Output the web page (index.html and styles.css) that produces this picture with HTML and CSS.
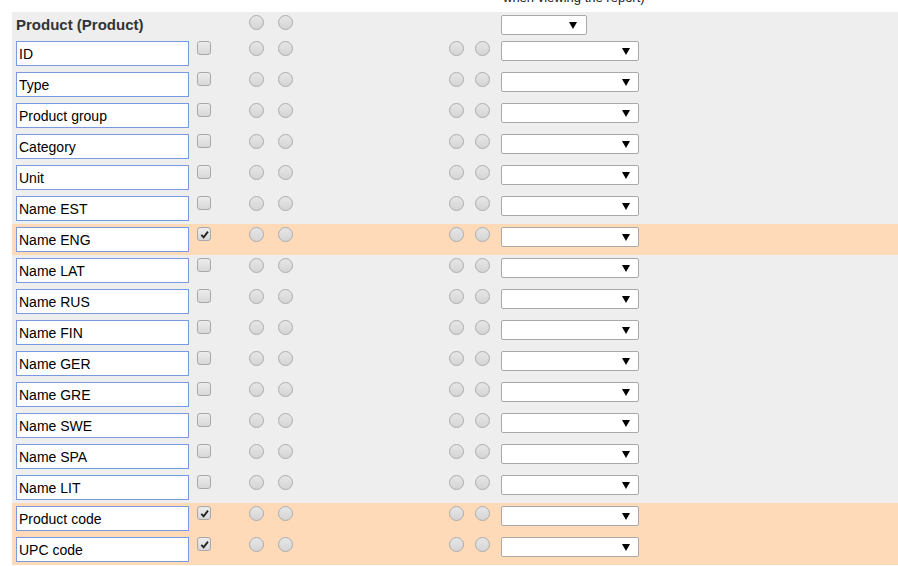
FILE: index.html
```html
<!DOCTYPE html>
<html lang="en">
<head>
    <meta charset="UTF-8">
    <meta name="viewport" content="width=device-width, initial-scale=1.0">
    <title>Report fields</title>
    <link rel="stylesheet" href="styles.css">
</head>
<body>
    <div class="caption"><p>when viewing the report)</p></div>

    <div class="panel">
        <div class="row head">
            <div class="title">Product (Product)</div>
            <span class="radio"></span>
            <span class="radio r2"></span>
            <div class="pick small"></div>
        </div>

        <div class="row"><input class="name" value="ID"><span class="check"></span><span class="radio r1"></span><span class="radio r2"></span><span class="radio r3"></span><span class="radio r4"></span><div class="pick"></div></div>
        <div class="row"><input class="name" value="Type"><span class="check"></span><span class="radio r1"></span><span class="radio r2"></span><span class="radio r3"></span><span class="radio r4"></span><div class="pick"></div></div>
        <div class="row"><input class="name" value="Product group"><span class="check"></span><span class="radio r1"></span><span class="radio r2"></span><span class="radio r3"></span><span class="radio r4"></span><div class="pick"></div></div>
        <div class="row"><input class="name" value="Category"><span class="check"></span><span class="radio r1"></span><span class="radio r2"></span><span class="radio r3"></span><span class="radio r4"></span><div class="pick"></div></div>
        <div class="row"><input class="name" value="Unit"><span class="check"></span><span class="radio r1"></span><span class="radio r2"></span><span class="radio r3"></span><span class="radio r4"></span><div class="pick"></div></div>
        <div class="row"><input class="name" value="Name EST"><span class="check"></span><span class="radio r1"></span><span class="radio r2"></span><span class="radio r3"></span><span class="radio r4"></span><div class="pick"></div></div>
        <div class="row picked"><input class="name" value="Name ENG"><span class="check on"><svg viewBox="0 0 12 12"><path d="M2.5 6.5 L5 9 L9.8 2.8" fill="none" stroke="#222" stroke-width="2"/></svg></span><span class="radio r1"></span><span class="radio r2"></span><span class="radio r3"></span><span class="radio r4"></span><div class="pick"></div></div>
        <div class="row"><input class="name" value="Name LAT"><span class="check"></span><span class="radio r1"></span><span class="radio r2"></span><span class="radio r3"></span><span class="radio r4"></span><div class="pick"></div></div>
        <div class="row"><input class="name" value="Name RUS"><span class="check"></span><span class="radio r1"></span><span class="radio r2"></span><span class="radio r3"></span><span class="radio r4"></span><div class="pick"></div></div>
        <div class="row"><input class="name" value="Name FIN"><span class="check"></span><span class="radio r1"></span><span class="radio r2"></span><span class="radio r3"></span><span class="radio r4"></span><div class="pick"></div></div>
        <div class="row"><input class="name" value="Name GER"><span class="check"></span><span class="radio r1"></span><span class="radio r2"></span><span class="radio r3"></span><span class="radio r4"></span><div class="pick"></div></div>
        <div class="row"><input class="name" value="Name GRE"><span class="check"></span><span class="radio r1"></span><span class="radio r2"></span><span class="radio r3"></span><span class="radio r4"></span><div class="pick"></div></div>
        <div class="row"><input class="name" value="Name SWE"><span class="check"></span><span class="radio r1"></span><span class="radio r2"></span><span class="radio r3"></span><span class="radio r4"></span><div class="pick"></div></div>
        <div class="row"><input class="name" value="Name SPA"><span class="check"></span><span class="radio r1"></span><span class="radio r2"></span><span class="radio r3"></span><span class="radio r4"></span><div class="pick"></div></div>
        <div class="row"><input class="name" value="Name LIT"><span class="check"></span><span class="radio r1"></span><span class="radio r2"></span><span class="radio r3"></span><span class="radio r4"></span><div class="pick"></div></div>
        <div class="row picked"><input class="name" value="Product code"><span class="check on"><svg viewBox="0 0 12 12"><path d="M2.5 6.5 L5 9 L9.8 2.8" fill="none" stroke="#222" stroke-width="2"/></svg></span><span class="radio r1"></span><span class="radio r2"></span><span class="radio r3"></span><span class="radio r4"></span><div class="pick"></div></div>
        <div class="row picked"><input class="name" value="UPC code"><span class="check on"><svg viewBox="0 0 12 12"><path d="M2.5 6.5 L5 9 L9.8 2.8" fill="none" stroke="#222" stroke-width="2"/></svg></span><span class="radio r1"></span><span class="radio r2"></span><span class="radio r3"></span><span class="radio r4"></span><div class="pick"></div></div>
    </div>
</body>
</html>
```

FILE: styles.css
```css
body {
    margin: 0;
    font-family: "Liberation Sans", Arial, sans-serif;
    background-color: #fff;
    overflow: hidden;
}

.caption {
    height: 12px;
    overflow: hidden;
}

.caption p {
    margin: -10px 0 0 503px;
    font-size: 13px;
    line-height: 15px;
    color: #222;
}

.panel {
    margin-left: 12px;
    background-color: #eee;
}

.row {
    display: flex;
    align-items: flex-start;
    height: 31px;
    padding: 3px 0 0 4px;
    box-sizing: border-box;
}

.row.head {
    height: 26px;
}

.row.picked {
    background-color: #ffdab9;
}

.title {
    width: 233px;
    font-size: 15px;
    font-weight: bold;
    line-height: 20px;
    color: #333;
}

.name {
    width: 173px;
    height: 25px;
    margin: 0;
    padding: 0 2px;
    box-sizing: border-box;
    border: 1px solid #7a9ae0;
    font-family: "Liberation Sans", Arial, sans-serif;
    font-size: 14px;
    color: #000;
    background-color: #fff;
    outline: none;
}

.check {
    display: flex;
    align-items: center;
    justify-content: center;
    width: 14px;
    height: 14px;
    margin-left: 8px;
    box-sizing: border-box;
    border: 1px solid #a8a8a8;
    border-radius: 3px;
    background: linear-gradient(#ececec, #d8d8d8);
}

.check svg {
    width: 11px;
    height: 11px;
}

.radio {
    width: 15px;
    height: 15px;
    box-sizing: border-box;
    border: 1px solid #acacac;
    border-radius: 50%;
    background: linear-gradient(#e6e6e6, #d5d5d5);
}

.r1 {
    margin-left: 38px;
}

.r2 {
    margin-left: 14px;
}

.r3 {
    margin-left: 156px;
}

.r4 {
    margin-left: 11px;
}

.pick {
    position: relative;
    width: 138px;
    height: 20px;
    margin-left: 11px;
    box-sizing: border-box;
    border: 1px solid #a9a9a9;
    border-radius: 2px;
    background-color: #fff;
}

.pick::after {
    content: "";
    position: absolute;
    right: 8px;
    top: 6px;
    border-left: 4px solid transparent;
    border-right: 4px solid transparent;
    border-top: 7px solid #000;
}

.pick.small {
    width: 86px;
    height: 20px;
    margin-left: 208px;
}

.pick.small::after {
    right: 9px;
}
```
